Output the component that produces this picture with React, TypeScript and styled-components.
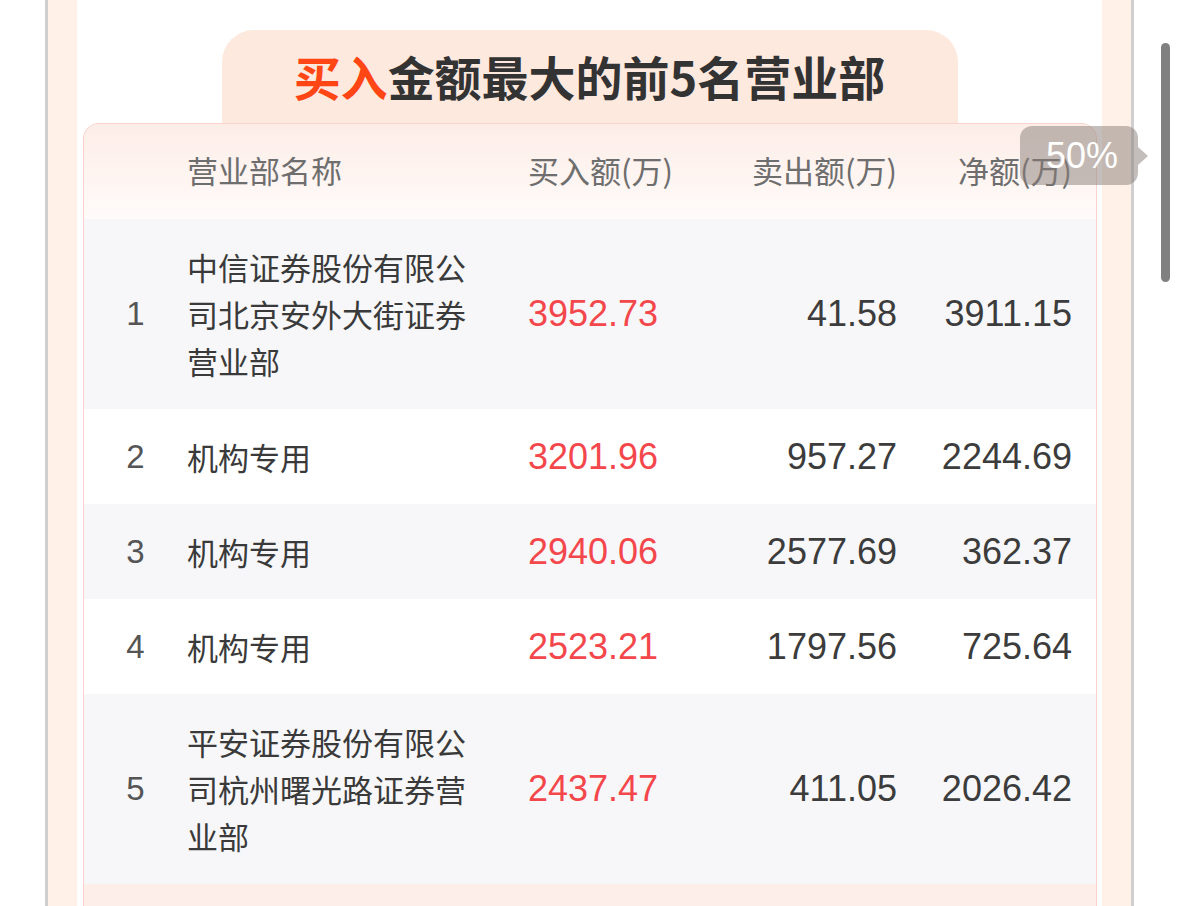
import React from "react";
import styled, { createGlobalStyle } from "styled-components";

const GlobalStyle = createGlobalStyle`
  html, body {
    margin: 0;
    padding: 0;
    background: #ffffff;
  }
  body {
    font-family: "Liberation Sans", "Noto Sans CJK SC", sans-serif;
    color: #333333;
  }
`;

const Page = styled.div`
  position: relative;
  min-height: 906px;
  padding-left: 45px;
  overflow: hidden;
`;

const Frame = styled.div`
  width: 1025px;
  min-height: 906px;
  padding: 0 29px;
  background-color: #fff0e8;
  border-left: 3px solid #cfcfcf;
  border-right: 3px solid #cfcfcf;
`;

const Panel = styled.div`
  min-height: 906px;
  background-color: #ffffff;
  padding-top: 30px;
  box-sizing: border-box;
  display: flex;
  flex-direction: column;
  align-items: center;
`;

const TitleTab = styled.div`
  width: 736px;
  height: 93px;
  border-radius: 32px 32px 0 0;
  background-color: #fee9df;
  display: flex;
  justify-content: center;
  align-items: center;
  padding-bottom: 2px;
  box-sizing: border-box;
  font-family: "Noto Sans CJK SC", sans-serif;
  font-weight: 700;
  font-size: 47px;
  color: #333333;
`;

const Highlight = styled.span`
  color: #ff4614;
`;

const Card = styled.div`
  align-self: stretch;
  margin: 0 5px 0 6px;
  border: 1px solid #fbd2cd;
  border-bottom: none;
  border-radius: 16px 16px 0 0;
  overflow: hidden;
  background-color: #fdeee9;
`;

const Grid = styled.div<{ striped?: boolean }>`
  display: grid;
  grid-template-columns: 103px 341px 200px 169px 175px 25px;
  align-items: center;
  background-color: ${(p) => (p.striped ? "#f7f7f9" : "#ffffff")};
`;

const HeaderRow = styled(Grid)`
  height: 95px;
  background: linear-gradient(180deg, #fdede7 0%, #fffbfa 100%);
  font-family: "Noto Sans CJK SC", sans-serif;
  font-size: 31px;
  color: #6e6e6e;
  padding-bottom: 5px;
  box-sizing: border-box;
`;

const HeadCell = styled.div<{ right?: boolean }>`
  text-align: ${(p) => (p.right ? "right" : "left")};
  white-space: nowrap;
`;

const Row = styled(Grid)<{ tall?: boolean }>`
  padding: ${(p) => (p.tall ? "24px 0 25px" : "24px 0")};
`;

const Rank = styled.div`
  text-align: center;
  font-size: 33px;
  color: #555555;
`;

const Name = styled.div`
  padding-right: 41px;
  font-family: "Noto Sans CJK SC", sans-serif;
  font-size: 31px;
  line-height: 47px;
  color: #3a3a3a;
  word-break: break-all;
`;

const Num = styled.div<{ red?: boolean; right?: boolean }>`
  font-size: 36px;
  color: ${(p) => (p.red ? "#f4474c" : "#3c3c3c")};
  text-align: ${(p) => (p.right ? "right" : "left")};
`;

const Footer = styled.div`
  height: 40px;
  background-color: #fdeee9;
`;

const Tooltip = styled.div`
  position: absolute;
  left: 1020px;
  top: 126px;
  width: 118px;
  height: 59px;
  border-radius: 12px;
  background-color: rgba(135, 125, 120, 0.5);
  color: #ffffff;
  font-size: 36px;
  display: flex;
  align-items: center;
  justify-content: center;
  padding-left: 6px;
  box-sizing: border-box;
  &::after {
    content: "";
    position: absolute;
    right: -10px;
    top: 21px;
    border-left: 10px solid rgba(135, 125, 120, 0.5);
    border-top: 9px solid transparent;
    border-bottom: 9px solid transparent;
  }
`;

const ScrollThumb = styled.div`
  position: absolute;
  left: 1161px;
  top: 43px;
  width: 9px;
  height: 239px;
  border-radius: 5px;
  background-color: #808080;
`;

interface ISeat {
  rank: number;
  name: string;
  buy: string;
  sell: string;
  net: string;
}

const seats: ISeat[] = [
  { rank: 1, name: "中信证券股份有限公司北京安外大街证券营业部", buy: "3952.73", sell: "41.58", net: "3911.15" },
  { rank: 2, name: "机构专用", buy: "3201.96", sell: "957.27", net: "2244.69" },
  { rank: 3, name: "机构专用", buy: "2940.06", sell: "2577.69", net: "362.37" },
  { rank: 4, name: "机构专用", buy: "2523.21", sell: "1797.56", net: "725.64" },
  { rank: 5, name: "平安证券股份有限公司杭州曙光路证券营业部", buy: "2437.47", sell: "411.05", net: "2026.42" },
];

function App() {
  return (
    <Page>
      <GlobalStyle />
      <Frame>
        <Panel>
          <TitleTab>
            <Highlight>买入</Highlight>金额最大的前5名营业部
          </TitleTab>
          <Card>
            <HeaderRow>
              <div></div>
              <HeadCell>营业部名称</HeadCell>
              <HeadCell>买入额(万)</HeadCell>
              <HeadCell right>卖出额(万)</HeadCell>
              <HeadCell right>净额(万)</HeadCell>
              <div></div>
            </HeaderRow>
            {seats.map((seat, index) => (
              <Row
                key={seat.rank}
                striped={index % 2 === 0}
                tall={seat.name.length > 9}
              >
                <Rank>{seat.rank}</Rank>
                <Name>{seat.name}</Name>
                <Num red>{seat.buy}</Num>
                <Num right>{seat.sell}</Num>
                <Num right>{seat.net}</Num>
                <div></div>
              </Row>
            ))}
            <Footer />
          </Card>
        </Panel>
      </Frame>
      <Tooltip>50%</Tooltip>
      <ScrollThumb />
    </Page>
  );
}

export default App;
